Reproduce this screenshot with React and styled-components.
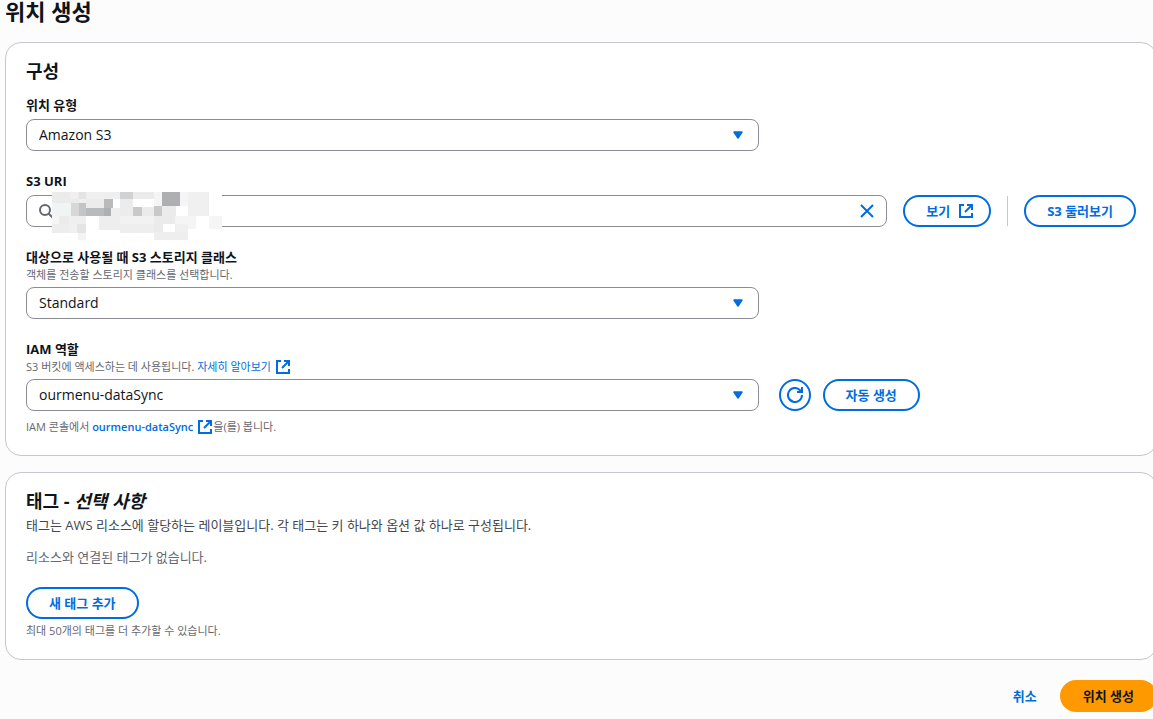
import { useState } from 'react';
import styled, { createGlobalStyle } from 'styled-components';

const GlobalStyle = createGlobalStyle`
  *,
  *::before,
  *::after {
    box-sizing: border-box;
  }

  body {
    margin: 0;
    overflow-x: hidden;
    background-color: #fcfcfd;
    color: #0f141a;
    font-family: 'Open Sans', 'Noto Sans CJK KR', sans-serif;
    font-size: 13px;
    line-height: 20px;
  }

  h1,
  h2,
  p {
    margin: 0;
  }

  button,
  input,
  select {
    font-family: inherit;
    color: inherit;
  }
`;

const Page = styled.form`
  display: flex;
  flex-direction: column;
  gap: 16px;
  margin: 0 -4px 0 5px;
`;

const PageTitle = styled.h1`
  margin-bottom: 4px;
  font-size: 22px;
  font-weight: 700;
  line-height: 22px;
`;

const Card = styled.section`
  padding: 16px 20px 20px;
  border: 1px solid #c6c6cd;
  border-radius: 16px;
  background-color: #fff;
`;

const CardTitle = styled.h2`
  font-size: 18px;
  font-weight: 700;
  line-height: 24px;
`;

const Fields = styled.div`
  display: flex;
  flex-direction: column;
  gap: 20px;
  margin-top: 12px;
`;

const Label = styled.label`
  display: block;
  font-weight: 700;
  line-height: 20px;
`;

const Hint = styled.p`
  margin-top: ${(props) => props.$space || 0}px;
  color: #656871;
  font-size: 11px;
  line-height: 16px;
`;

const Row = styled.div`
  display: flex;
  align-items: center;
  gap: ${(props) => props.$gap || 16}px;
  margin-top: 4px;
`;

const ButtonGroup = styled.div`
  display: flex;
  gap: 12px;
`;

const SelectBox = styled.div`
  position: relative;
  flex: 0 0 66%;

  svg {
    position: absolute;
    top: 12px;
    right: 16px;
    pointer-events: none;
  }
`;

const Select = styled.select`
  display: block;
  width: 100%;
  height: 32px;
  padding: 0 40px 2px 12px;
  border: 1px solid #8c8c94;
  border-radius: 8px;
  background-color: #fff;
  font-size: 14px;
  appearance: none;
`;

const SearchBox = styled.div`
  position: relative;
  display: flex;
  flex: 1;
  align-items: center;
  height: 32px;
  padding: 0 11px;
  border: 1px solid #8c8c94;
  border-radius: 8px;
  background-color: #fff;
`;

const SearchInput = styled.input`
  flex: 1;
  min-width: 0;
  border: none;
  outline: none;
  background: transparent;
  font-size: 14px;
`;

const Mask = styled.svg`
  position: absolute;
  top: -4px;
  left: 25px;
`;

const ClearButton = styled.button`
  display: flex;
  padding: 0;
  border: none;
  background: none;
  cursor: pointer;
`;

const Button = styled.button`
  display: inline-flex;
  align-items: center;
  gap: 8px;
  height: 32px;
  padding: 0 21px 2px;
  border: 2px solid #006ce0;
  border-radius: 20px;
  background-color: #fff;
  color: #006ce0;
  font-size: 13px;
  font-weight: 700;
  white-space: nowrap;
  cursor: pointer;

  svg {
    margin: 0 -6px -2px 0;
  }
`;

const IconButton = styled(Button)`
  justify-content: center;
  width: 32px;
  padding: 0;

  svg {
    margin: 0;
  }
`;

const PrimaryButton = styled(Button)`
  border-color: #ff9900;
  background-color: #ff9900;
  color: #0f141a;
`;

const LinkButton = styled(Button)`
  border-color: transparent;
  background-color: transparent;
`;

const Divider = styled.span`
  width: 1px;
  height: 30px;
  background-color: #c6c6cd;
`;

const Link = styled.a`
  color: #006ce0;
  font-weight: ${(props) => (props.$bold ? 600 : 400)};
  text-decoration: none;

  svg {
    margin-left: 4px;
    vertical-align: top;
  }
`;

const Description = styled.p`
  margin-top: 2px;
  color: #424650;
  line-height: 20px;
`;

const Empty = styled.p`
  margin: 12px 0 20px;
  color: #656871;
`;

const Actions = styled.div`
  display: flex;
  justify-content: flex-end;
  margin-top: 4px;
`;

function CaretIcon() {
  return (
    <svg width="10" height="8" viewBox="0 0 10 8">
      <path
        d="M1 1h8L5 7z"
        fill="#006ce0"
        stroke="#006ce0"
        strokeWidth="1.5"
        strokeLinejoin="round"
      />
    </svg>
  );
}

function ExternalIcon() {
  return (
    <svg
      width="16"
      height="16"
      viewBox="0 0 16 16"
      fill="none"
      stroke="#006ce0"
      strokeWidth="2"
    >
      <path d="M6 2H2v12h12v-4" />
      <path d="M9 2h5v5" />
      <path d="M7 9l7-7" />
    </svg>
  );
}

function SearchIcon() {
  return (
    <svg
      width="16"
      height="16"
      viewBox="0 0 16 16"
      fill="none"
      stroke="#656871"
      strokeWidth="2"
    >
      <circle cx="7" cy="7" r="5" />
      <path d="M15 15l-4.5-4.5" />
    </svg>
  );
}

function CloseIcon() {
  return (
    <svg
      width="16"
      height="16"
      viewBox="0 0 16 16"
      fill="none"
      stroke="#006ce0"
      strokeWidth="2"
    >
      <path d="M2 2l12 12M14 2L2 14" />
    </svg>
  );
}

function RefreshIcon() {
  return (
    <svg
      width="16"
      height="16"
      viewBox="0 0 16 16"
      fill="none"
      stroke="#006ce0"
      strokeWidth="2"
    >
      <path d="M15 8a7 7 0 1 1-2.2-5.1L15 5" />
      <path d="M15 0v5h-5" />
    </svg>
  );
}

// x, y, width, height, colour
const maskBlocks = [
  [0, 0, 170, 40, '#ffffff'],
  [0, 0, 27, 11, '#ebebeb'],
  [18, 0, 8, 7, '#f0f0f0'],
  [0, 11, 19, 13, '#f1f4f4'],
  [27, 0, 7, 7, '#e4e4e4'],
  [27, 7, 7, 4, '#efefef'],
  [19, 11, 8, 13, '#d7d7d7'],
  [27, 11, 7, 13, '#c3c4c6'],
  [34, 0, 34, 7, '#efefef'],
  [34, 7, 18, 9, '#ececec'],
  [34, 16, 18, 8, '#b9babc'],
  [52, 7, 9, 9, '#b9babc'],
  [52, 16, 7, 8, '#aeafb2'],
  [59, 16, 9, 8, '#eeeeee'],
  [68, 0, 13, 7, '#d0d1d3'],
  [81, 0, 21, 7, '#ebebeb'],
  [68, 7, 13, 17, '#ececec'],
  [81, 15, 9, 9, '#c8c9cb'],
  [90, 15, 12, 9, '#ebebeb'],
  [102, 0, 8, 14, '#f5f5f5'],
  [102, 14, 8, 10, '#c8c9cb'],
  [110, 0, 18, 14, '#aeafb2'],
  [110, 14, 14, 10, '#ebebeb'],
  [128, 0, 8, 14, '#f5f5f5'],
  [136, 0, 21, 24, '#f0f0f0'],
  [0, 24, 7, 9, '#f5f5f5'],
  [7, 24, 10, 8, '#ebebeb'],
  [17, 24, 17, 8, '#efefef'],
  [0, 32, 17, 9, '#ededed'],
  [17, 32, 8, 9, '#f0f0f0'],
  [25, 32, 9, 9, '#e4e4e4'],
  [26, 41, 8, 7, '#f3f3f3'],
  [47, 24, 21, 14, '#eeeeee'],
  [68, 24, 34, 8, '#f2f2f2'],
  [68, 32, 34, 9, '#eeeeee'],
  [102, 24, 21, 8, '#ebebeb'],
  [102, 32, 9, 8, '#ebebeb'],
  [123, 24, 21, 13, '#f5f5f5'],
  [123, 32, 13, 8, '#f0f0f0'],
  [157, 24, 13, 13, '#f5f5f5'],
  [102, 40, 34, 8, '#eeeeee'],
];

function RedactedValue() {
  return (
    <Mask width="170" height="48" viewBox="0 0 170 48" aria-hidden="true">
      {maskBlocks.map(([x, y, width, height, fill]) => (
        <rect
          key={`${x}-${y}-${width}`}
          x={x}
          y={y}
          width={width}
          height={height}
          fill={fill}
        />
      ))}
    </Mask>
  );
}

function SelectField({ id, options }) {
  return (
    <SelectBox>
      <Select id={id}>
        {options.map((option) => (
          <option key={option}>{option}</option>
        ))}
      </Select>
      <CaretIcon />
    </SelectBox>
  );
}

function Configuration() {
  const [uri, setUri] = useState('');

  return (
    <Card>
      <CardTitle>구성</CardTitle>
      <Fields>
        <div>
          <Label htmlFor="location-type">위치 유형</Label>
          <Row>
            <SelectField id="location-type" options={['Amazon S3']} />
          </Row>
        </div>
        <div>
          <Label htmlFor="s3-uri">S3 URI</Label>
          <Row>
            <SearchBox>
              <SearchIcon />
              <SearchInput
                id="s3-uri"
                type="text"
                value={uri}
                onChange={(e) => setUri(e.target.value)}
              />
              <RedactedValue />
              <ClearButton
                type="button"
                aria-label="지우기"
                onClick={() => setUri('')}
              >
                <CloseIcon />
              </ClearButton>
            </SearchBox>
            <Button type="button">
              보기
              <ExternalIcon />
            </Button>
            <Divider />
            <Button type="button">S3 둘러보기</Button>
          </Row>
        </div>
        <div>
          <Label htmlFor="storage-class">
            대상으로 사용될 때 S3 스토리지 클래스
          </Label>
          <Hint>객체를 전송할 스토리지 클래스를 선택합니다.</Hint>
          <Row>
            <SelectField id="storage-class" options={['Standard']} />
          </Row>
        </div>
        <div>
          <Label htmlFor="iam-role">IAM 역할</Label>
          <Hint>
            S3 버킷에 액세스하는 데 사용됩니다.{' '}
            <Link href="#learn-more">
              자세히 알아보기
              <ExternalIcon />
            </Link>
          </Hint>
          <Row $gap={20}>
            <SelectField id="iam-role" options={['ourmenu-dataSync']} />
            <ButtonGroup>
              <IconButton type="button" aria-label="새로 고침">
                <RefreshIcon />
              </IconButton>
              <Button type="button">자동 생성</Button>
            </ButtonGroup>
          </Row>
          <Hint $space={8}>
            IAM 콘솔에서{' '}
            <Link href="#iam-role" $bold>
              ourmenu-dataSync
              <ExternalIcon />
            </Link>
            을(를) 봅니다.
          </Hint>
        </div>
      </Fields>
    </Card>
  );
}

function Tags() {
  return (
    <Card>
      <CardTitle>
        태그 - <em>선택 사항</em>
      </CardTitle>
      <Description>
        태그는 AWS 리소스에 할당하는 레이블입니다. 각 태그는 키 하나와 옵션 값
        하나로 구성됩니다.
      </Description>
      <Empty>리소스와 연결된 태그가 없습니다.</Empty>
      <Button type="button">새 태그 추가</Button>
      <Hint $space={4}>최대 50개의 태그를 더 추가할 수 있습니다.</Hint>
    </Card>
  );
}

function App() {
  return (
    <>
      <GlobalStyle />
      <Page onSubmit={(e) => e.preventDefault()}>
        <PageTitle>위치 생성</PageTitle>
        <Configuration />
        <Tags />
        <Actions>
          <LinkButton type="button">취소</LinkButton>
          <PrimaryButton type="submit">위치 생성</PrimaryButton>
        </Actions>
      </Page>
    </>
  );
}

export default App;
